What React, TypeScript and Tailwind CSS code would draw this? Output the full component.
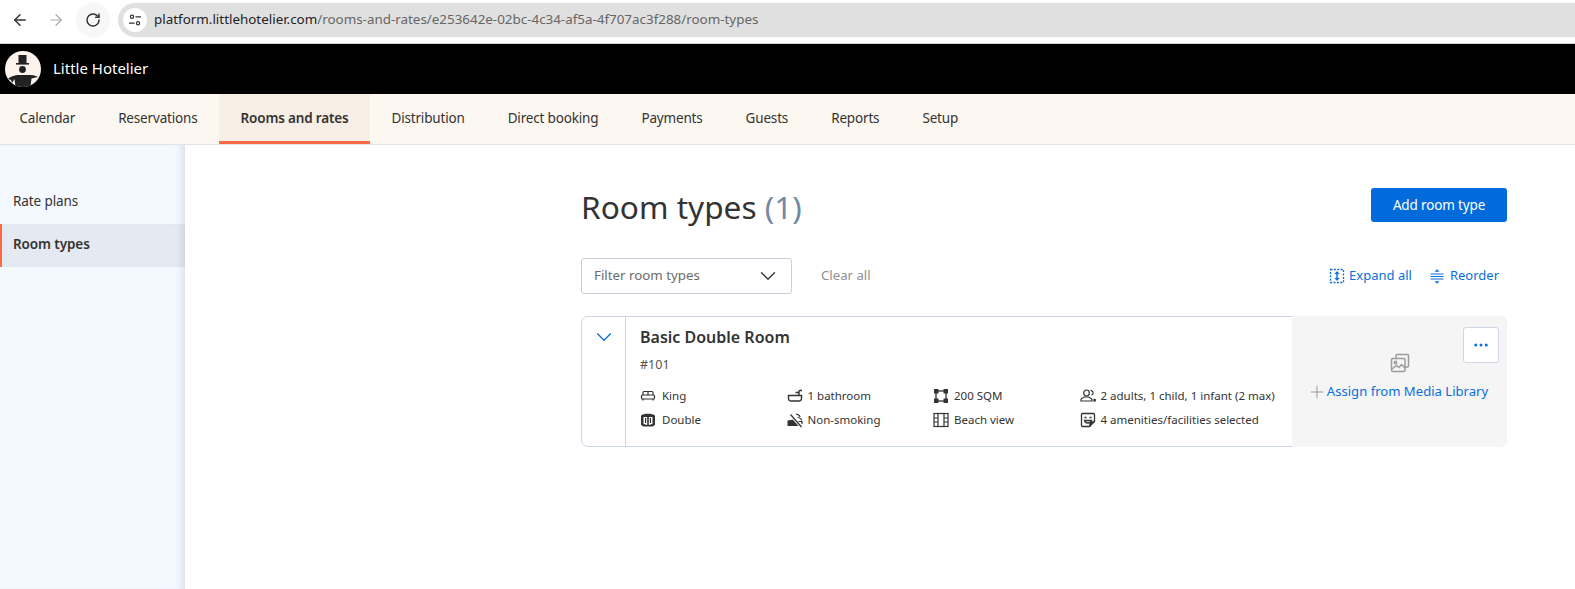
import React from 'react';
import { ArrowLeft, ArrowRight, RotateCw, ChevronDown, Plus, Ellipsis } from 'lucide-react';

const navItems = ['Calendar', 'Reservations', 'Rooms and rates', 'Distribution', 'Direct booking', 'Payments', 'Guests', 'Reports', 'Setup'];

function Logo() {
  return (
    <svg width="36" height="36" viewBox="0 0 36 36">
      <defs>
        <clipPath id="logo-circle">
          <circle cx="18" cy="18" r="18" />
        </clipPath>
      </defs>
      <circle cx="18" cy="18" r="18" fill="#fdf3ec" />
      <rect x="13.5" y="4" width="8" height="8.5" fill="#222" />
      <rect x="11" y="12" width="13" height="1.6" fill="#222" />
      <circle cx="17.5" cy="18.5" r="3.4" fill="#222" />
      <path
        clipPath="url(#logo-circle)"
        d="M3 28 C8 23.5 13 24 18 24 C24 24 29 23.5 33 26 L26.5 27.5 L25.5 36 L10.5 36 L9.5 28 L7 32 L6 29 Z"
        fill="#222"
      />
    </svg>
  );
}

function Bed() {
  return (
    <svg width="16" height="16" viewBox="0 0 16 16" fill="none" stroke="#333" strokeWidth="1.2">
      <path d="M3 7V4.5A1 1 0 0 1 4 3.5H12A1 1 0 0 1 13 4.5V7M8 3.5V7" />
      <rect x="1.5" y="7" width="13" height="4" rx="1" />
      <path d="M3 11v1.5M13 11v1.5" />
    </svg>
  );
}

function Bath() {
  return (
    <svg width="16" height="16" viewBox="0 0 16 16" fill="none" stroke="#333" strokeWidth="1.4">
      <path d="M1.5 7.5H14.5V10.5A2.5 2.5 0 0 1 12 13H4A2.5 2.5 0 0 1 1.5 10.5Z" />
      <path d="M12 7V3.5A1 1 0 0 1 13 2.5H15M8.5 4.5H12" />
    </svg>
  );
}

function Sqm() {
  return (
    <svg width="16" height="16" viewBox="0 0 16 16" fill="none">
      <rect x="3" y="3" width="10" height="10" stroke="#333" strokeWidth="1.3" />
      <rect x="1" y="1" width="4.5" height="4.5" fill="#333" />
      <rect x="10.5" y="1" width="4.5" height="4.5" fill="#333" />
      <rect x="1" y="10.5" width="4.5" height="4.5" fill="#333" />
      <rect x="10.5" y="10.5" width="4.5" height="4.5" fill="#333" />
    </svg>
  );
}

function People() {
  return (
    <svg width="16" height="16" viewBox="0 0 16 16" fill="none" stroke="#333" strokeWidth="1.2">
      <path d="M6.5 2A2.8 2.8 0 0 1 9.3 4.8C9.3 6.8 8 8 6.5 8S3.7 6.8 3.7 4.8A2.8 2.8 0 0 1 6.5 2Z" />
      <path d="M1 13H12V11.5C12 10 9.5 9.8 8.5 9H4.5C3.5 9.8 1 10 1 11.5Z" />
      <path d="M10.5 2.3A2.6 2.6 0 0 1 11.5 7.3" />
      <path d="M14 11.5h1.2v1.5H14Z" fill="#333" />
    </svg>
  );
}

function DoorType() {
  return (
    <svg width="16" height="16" viewBox="0 0 16 16">
      <path d="M1 3.5C3 1.2 13 1.2 15 3.5V12.5L13 14.5H3L1 12.5Z" fill="#333" />
      <path d="M3.5 5H7.2V13L3.5 12Z" fill="#fff" />
      <path d="M8.8 5H12.5V12L8.8 13Z" fill="#fff" />
      <rect x="5" y="6" width="1.2" height="5" fill="#333" />
      <rect x="9.8" y="6" width="1.2" height="5" fill="#333" />
    </svg>
  );
}

function NoSmoking() {
  return (
    <svg width="16" height="16" viewBox="0 0 16 16" fill="none">
      <path d="M0.5 8.5L7 7.5L13 14H0.5Z" fill="#333" />
      <path d="M3 2.5L14 15" stroke="#fff" strokeWidth="2.6" />
      <path d="M3.5 2.5L14.5 15" stroke="#333" strokeWidth="1.3" />
      <path d="M9 2c2 .6 4 .8 4 3M10.5 5.5c2 .2 4 .8 4 3M11.5 9.5h3.5v2.5" stroke="#333" strokeWidth="1.2" />
    </svg>
  );
}

function ViewIcon() {
  return (
    <svg width="16" height="16" viewBox="0 0 16 16" fill="none" stroke="#333" strokeWidth="1.2">
      <rect x="1" y="1.5" width="14" height="13" />
      <path d="M5 1.5V14.5M11 1.5V14.5M1 6H5M1 10H5M11 6H15M11 10H15" />
    </svg>
  );
}

function Amenities() {
  return (
    <svg width="16" height="16" viewBox="0 0 16 16" fill="none" stroke="#333" strokeWidth="1.3">
      <path d="M9.5 14.5H2.5A1 1 0 0 1 1.5 13.5V2.5A1 1 0 0 1 2.5 1.5H13.5A1 1 0 0 1 14.5 2.5V9.5Z" />
      <path d="M4.5 5.5H6.5M9.5 5.5H11.5M4.5 8.5H11.5C11 10.5 9.5 11 8 11S5 10.5 4.5 8.5Z" />
      <path d="M9.5 14.5L10.5 10.5L14.5 9.5" fill="#333" />
    </svg>
  );
}

function ExpandAll() {
  return (
    <svg width="16" height="16" viewBox="0 0 16 16" fill="none" stroke="#0a6fdb">
      <rect x="1.5" y="1.5" width="13" height="13" strokeWidth="1.3" strokeDasharray="2 1.4" />
      <path d="M8 4V12" strokeWidth="1.4" />
      <path d="M5.8 5.8L8 3.5L10.2 5.8ZM5.8 10.2L8 12.5L10.2 10.2Z" fill="#0a6fdb" strokeWidth="0.6" />
    </svg>
  );
}

function Reorder() {
  return (
    <svg width="16" height="16" viewBox="0 0 16 16" fill="none" stroke="#0a6fdb" strokeWidth="1.2">
      <path d="M1.5 6H14.5M1.5 8.5H14.5M1.5 11H14.5" />
      <path d="M5.5 3.8L8 1.2L10.5 3.8ZM5.5 13.2L8 15.8L10.5 13.2Z" fill="#0a6fdb" stroke="none" />
    </svg>
  );
}

function MediaIcon() {
  return (
    <svg width="20" height="20" viewBox="0 0 20 20" fill="none" stroke="#9c9c9c" strokeWidth="1.5">
      <path d="M6 5V2.5A1 1 0 0 1 7 1.5H17.5A1 1 0 0 1 18.5 2.5V13A1 1 0 0 1 17.5 14H15" />
      <rect x="1.5" y="5.5" width="13.5" height="13" rx="1.2" />
      <circle cx="5.5" cy="9.5" r="1.2" />
      <path d="M2 16L6.5 12.5L9 14.5L11.5 11.5L15 15" />
    </svg>
  );
}

const specs = [
  [
    { icon: <Bed />, label: 'King' },
    { icon: <DoorType />, label: 'Double' },
  ],
  [
    { icon: <Bath />, label: '1 bathroom' },
    { icon: <NoSmoking />, label: 'Non-smoking' },
  ],
  [
    { icon: <Sqm />, label: '200 SQM' },
    { icon: <ViewIcon />, label: 'Beach view' },
  ],
  [
    { icon: <People />, label: '2 adults, 1 child, 1 infant (2 max)' },
    { icon: <Amenities />, label: '4 amenities/facilities selected' },
  ],
];

export default function App() {
  return (
    <div className="flex h-[589px] flex-col overflow-hidden bg-white font-['Noto_Sans',sans-serif] text-[#333]">
      {/* Browser bar */}
      <div className="flex h-[44px] shrink-0 items-center border-b border-[#d4d4d4] bg-white pb-[4px] pl-[11px]">
        <ArrowLeft size={18} strokeWidth={2} className="text-[#333]" />
        <ArrowRight size={18} strokeWidth={1.6} className="ml-[18px] text-[#aaa]" />
        <div className="ml-[11px] flex h-[34px] w-[34px] items-center justify-center rounded-full bg-[#f7f7f7]">
          <RotateCw size={16} strokeWidth={2.2} className="text-[#333]" />
        </div>
        <div className="ml-[8px] flex h-[34px] flex-1 items-center rounded-l-full bg-[#e0e0e0] pl-[5px] text-[13.4px]">
          <div className="mr-[7px] flex h-[24px] w-[24px] items-center justify-center rounded-full bg-white">
            <svg width="14" height="14" viewBox="0 0 14 14" fill="none" stroke="#333" strokeWidth="1.2">
              <circle cx="4" cy="3.8" r="1.6" />
              <path d="M7.5 3.8H13M1 10.2H6.5" />
              <circle cx="10" cy="10.2" r="1.6" />
            </svg>
          </div>
          <span className="text-[#222]">platform.littlehotelier.com</span>
          <span className="text-[#666]">/rooms-and-rates/e253642e-02bc-4c34-af5a-4f707ac3f288/room-types</span>
        </div>
      </div>

      {/* Black header */}
      <div className="flex h-[50px] shrink-0 items-center bg-black pl-[5px]">
        <Logo />
        <span className="mb-[1px] ml-[12px] text-[15px] text-white">Little Hotelier</span>
      </div>

      {/* Nav */}
      <div className="flex h-[51px] shrink-0 border-b border-[#dfe3ea] bg-[#fdf7f1]">
        <div className="-ml-[2px] flex">
          {navItems.map((item) => {
            const active = item === 'Rooms and rates';
            return (
              <div
                key={item}
                className={
                  active
                    ? 'flex items-center border-b-[3px] border-[#ff6a45] bg-[#f7eee5] px-[21.5px] pt-[1px] text-[13.5px] font-semibold tracking-[-0.17px] text-[#333]'
                    : 'flex items-center px-[21.5px] pb-[2px] text-[13.5px] tracking-[-0.17px] text-[#333]'
                }
              >
                {item}
              </div>
            );
          })}
        </div>
      </div>

      <div className="flex flex-1">
        {/* Sidebar */}
        <div className="w-[185px] shrink-0 bg-[#f4f8ff] pt-[35px] shadow-[inset_-8px_0_8px_-6px_rgba(60,70,90,0.16)]">
          <div className="flex h-[44px] items-center pb-[2px] pl-[13px] text-[13.5px] tracking-[-0.1px] text-[#333]">Rate plans</div>
          <div className="flex h-[43px] items-center border-l-[2px] border-[#ff6a45] bg-[#e5e9f1] pb-[2px] pl-[11px] text-[13.5px] font-semibold tracking-[-0.1px] text-[#333] shadow-[inset_-8px_0_8px_-6px_rgba(60,70,90,0.16)]">
            Room types
          </div>
        </div>

        {/* Main */}
        <div className="flex flex-1 justify-end pr-[68px] pt-[43px]">
          <div className="w-[926px]">
            <div className="flex h-[34px] items-center justify-between">
              <h1 className="pt-[3px] text-[31.6px] leading-none text-[#333]">
                Room types <span className="text-[#7489a3]">(1)</span>
              </h1>
              <button className="flex h-[34px] w-[136px] items-center justify-center rounded-[3px] bg-[#016bdb] text-[13.5px] tracking-[-0.15px] text-white">
                Add room type
              </button>
            </div>

            <div className="mt-[36px] flex items-center">
              <div className="flex h-[36px] w-[211px] items-center justify-between rounded-[3px] border border-[#c6cfdb] pl-[12px] pr-[10px] text-[13.3px] text-[#6b6b6b]">
                <span className="-mt-[1px]">Filter room types</span>
                <ChevronDown size={26} strokeWidth={1.2} className="text-[#333]" />
              </div>
              <span className="ml-[29px] text-[13.2px] text-[#8f8f8f]">Clear all</span>
              <div className="ml-auto flex items-center pr-[8px] text-[13px] text-[#0a6fdb]">
                <ExpandAll />
                <span className="ml-[4px]">Expand all</span>
                <span className="ml-[17px] flex">
                  <Reorder />
                </span>
                <span className="ml-[5px]">Reorder</span>
              </div>
            </div>

            {/* Room card */}
            <div className="mt-[22px] flex h-[131px] rounded-[7px] border border-[#cdd6e6]">
              <div className="flex w-[44px] shrink-0 justify-center border-r border-[#cdd6e6] pt-[7px]">
                <ChevronDown size={26} strokeWidth={1.2} className="text-[#0a6fdb]" />
              </div>
              <div className="flex-1 pl-[14px]">
                <div className="pt-[8px] text-[16px] font-semibold leading-[24px]">Basic Double Room</div>
                <div className="mt-[7px] text-[12.5px] leading-[18px] text-[#555]">#101</div>
                <div className="mt-[14px] flex">
                  {specs.map((col, i) => (
                    <div key={i} className="w-[146.5px] shrink-0 last:w-auto">
                      {col.map((s) => (
                        <div
                          key={s.label}
                          className={
                            i === 0
                              ? 'mb-[8px] flex h-[16px] items-center gap-[6px] text-[11.5px] text-[#333]'
                              : 'mb-[8px] flex h-[16px] items-center gap-[5px] text-[11.5px] text-[#333]'
                          }
                        >
                          {s.icon}
                          <span>{s.label}</span>
                        </div>
                      ))}
                    </div>
                  ))}
                </div>
              </div>
              <div className="relative -my-px -mr-px flex w-[215px] shrink-0 flex-col items-center rounded-r-[7px] bg-[#f5f5f5] pt-[37px]">
                <MediaIcon />
                <div className="mt-[9px] flex items-center text-[13.1px] text-[#0a6fdb]">
                  <Plus size={20} strokeWidth={1} className="-ml-[4px] text-[#8a8a8a]" />
                  <span>Assign from Media Library</span>
                </div>
                <div className="absolute right-[8px] top-[11px] flex h-[36px] w-[36px] items-center justify-center rounded-[3px] border border-[#cdd6e6] bg-white">
                  <Ellipsis size={18} strokeWidth={2} className="text-[#0a6fdb]" />
                </div>
              </div>
            </div>
          </div>
        </div>
      </div>
    </div>
  );
}
